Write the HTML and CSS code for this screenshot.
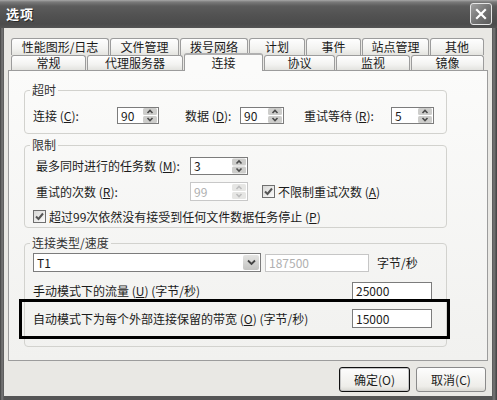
FILE: index.html
```html
<!DOCTYPE html>
<html lang="zh-CN">
<head>
<meta charset="utf-8">
<title>选项</title>
<link rel="stylesheet" href="styles.css">
</head>
<body>
<div class="window">
  <div class="titlebar">
    <span class="title">选项</span>
    <span class="close"><svg width="14" height="14" viewBox="0 0 14 14"><path d="M3 3 L11 11 M11 3 L3 11" stroke="#fff" stroke-width="2.2" stroke-linecap="square" fill="none"/></svg></span>
  </div>
  <div class="frame">
    <div class="dialog">
      <div class="tabs">
        <div class="tabrow row1">
          <div class="tab">性能图形/日志</div>
          <div class="tab">文件管理</div>
          <div class="tab">拨号网络</div>
          <div class="tab">计划</div>
          <div class="tab">事件</div>
          <div class="tab">站点管理</div>
          <div class="tab">其他</div>
        </div>
        <div class="tabrow row2">
          <div class="tab">常规</div>
          <div class="tab">代理服务器</div>
          <div class="tab active">连接</div>
          <div class="tab">协议</div>
          <div class="tab">监视</div>
          <div class="tab">镜像</div>
        </div>
      </div>
      <div class="panel">
        <fieldset class="group g1">
          <legend>超时</legend>
          <div class="row r17">
            <span class="lbl l1">连接 (<u>C</u>):</span>
            <span class="spin s1"><span class="val">90</span><svg class="ud" width="14" height="15" viewBox="0 0 14 15"><rect x="0" y="0" width="14" height="7" rx="1.5" fill="#cdcdcb"/><rect x="0" y="8" width="14" height="7" rx="1.5" fill="#cdcdcb"/><path d="M4.5 5 L7 2.5 L9.5 5" fill="none" stroke="#4a4a4a" stroke-width="1.6"/><path d="M4.5 10 L7 12.5 L9.5 10" fill="none" stroke="#4a4a4a" stroke-width="1.6"/></svg></span>
            <span class="lbl l2">数据 (<u>D</u>):</span>
            <span class="spin s2"><span class="val">90</span><svg class="ud" width="14" height="15" viewBox="0 0 14 15"><rect x="0" y="0" width="14" height="7" rx="1.5" fill="#cdcdcb"/><rect x="0" y="8" width="14" height="7" rx="1.5" fill="#cdcdcb"/><path d="M4.5 5 L7 2.5 L9.5 5" fill="none" stroke="#4a4a4a" stroke-width="1.6"/><path d="M4.5 10 L7 12.5 L9.5 10" fill="none" stroke="#4a4a4a" stroke-width="1.6"/></svg></span>
            <span class="lbl l3">重试等待 (<u>R</u>):</span>
            <span class="spin s3"><span class="val">5</span><svg class="ud" width="14" height="15" viewBox="0 0 14 15"><rect x="0" y="0" width="14" height="7" rx="1.5" fill="#cdcdcb"/><rect x="0" y="8" width="14" height="7" rx="1.5" fill="#cdcdcb"/><path d="M4.5 5 L7 2.5 L9.5 5" fill="none" stroke="#4a4a4a" stroke-width="1.6"/><path d="M4.5 10 L7 12.5 L9.5 10" fill="none" stroke="#4a4a4a" stroke-width="1.6"/></svg></span>
          </div>
        </fieldset>
        <fieldset class="group g2">
          <legend>限制</legend>
          <div class="row r18">
            <span class="lbl l4">最多同时进行的任务数 (<u>M</u>):</span>
            <span class="spin s4"><span class="val">3</span><svg class="ud" width="14" height="16" viewBox="0 0 14 15"><rect x="0" y="0" width="14" height="7" rx="1.5" fill="#cdcdcb"/><rect x="0" y="8" width="14" height="7" rx="1.5" fill="#cdcdcb"/><path d="M4.5 5 L7 2.5 L9.5 5" fill="none" stroke="#4a4a4a" stroke-width="1.6"/><path d="M4.5 10 L7 12.5 L9.5 10" fill="none" stroke="#4a4a4a" stroke-width="1.6"/></svg></span>
          </div>
          <div class="row r19 gap7">
            <span class="lbl l4">重试的次数 (<u>R</u>):</span>
            <span class="spin s4 disabled"><span class="val">99</span><svg class="ud" width="14" height="17" viewBox="0 0 14 15"><rect x="0" y="0" width="14" height="7" rx="1.5" fill="#e6e6e4"/><rect x="0" y="8" width="14" height="7" rx="1.5" fill="#e6e6e4"/><path d="M4.5 5 L7 2.5 L9.5 5" fill="none" stroke="#bdbdbd" stroke-width="1.6"/><path d="M4.5 10 L7 12.5 L9.5 10" fill="none" stroke="#bdbdbd" stroke-width="1.6"/></svg></span>
            <span class="check c1"><span class="box"><svg width="11" height="11" viewBox="0 0 11 11"><path d="M2 5.5 L4.5 8 L9 2.5" fill="none" stroke="#555" stroke-width="2"/></svg></span>不限制重试次数 (<u>A</u>)</span>
          </div>
          <div class="row r13 gap9">
            <span class="check"><span class="box"><svg width="11" height="11" viewBox="0 0 11 11"><path d="M2 5.5 L4.5 8 L9 2.5" fill="none" stroke="#555" stroke-width="2"/></svg></span>超过99次依然没有接受到任何文件数据任务停止 (<u>P</u>)</span>
          </div>
        </fieldset>
        <fieldset class="group g3">
          <legend>连接类型/速度</legend>
          <div class="row r19">
            <span class="combo"><span class="val">T1</span><span class="drop"><svg width="9" height="7" viewBox="0 0 9 7"><path d="M1 1.5 L4.5 5 L8 1.5" fill="none" stroke="#444" stroke-width="1.8"/></svg></span></span>
            <span class="field f-dis">187500</span>
            <span class="lbl unit">字节/秒</span>
          </div>
          <div class="row r18 gap10">
            <span class="lbl l5">手动模式下的流量 (<u>U</u>) (字节/秒)</span>
            <span class="field f-num">25000</span>
          </div>
          <div class="row r19 gap9">
            <span class="lbl l5">自动模式下为每个外部连接保留的带宽 (<u>O</u>) (字节/秒)</span>
            <span class="field f-num">15000</span>
          </div>
        </fieldset>
        <div class="highlight"></div>
      </div>
      <div class="buttons">
        <span class="btn default">确定(O)</span>
        <span class="btn">取消(C)</span>
      </div>
    </div>
  </div>
</div>
</body>
</html>
```
FILE: styles.css
```css
* { box-sizing: border-box; }
html, body { margin: 0; padding: 0; }
body {
  width: 497px;
  height: 400px;
  overflow: hidden;
  background: #4f5358;
  font-family: "Noto Sans CJK SC", "Noto Sans", sans-serif;
  font-size: 12px;
  color: #1b1b1b;
}
u { text-decoration: underline; text-underline-offset: 1px; }

.window {
  width: 497px;
  height: 400px;
  display: flex;
  flex-direction: column;
  background: #4f5358;
}
.titlebar {
  height: 28px;
  flex: none;
  display: flex;
  align-items: center;
  justify-content: space-between;
  padding: 0 5px 0 6px;
  background: linear-gradient(#a8a8a8 0, #7a7a7a 2px, #5c5c5c 6px, #525252 15px, #4b4b4b 24px, #545454 28px);
}
.title {
  color: #fff;
  font-weight: bold;
  font-size: 13px;
  line-height: 16px;
  letter-spacing: 1px;
  text-shadow: 1px 1px 0 #2a2a2a;
}
.close {
  width: 22px;
  height: 22px;
  border: 1px solid #e6e6e6;
  border-radius: 3px;
  background: linear-gradient(135deg, #a0a0a0, #727272 55%, #5c5c5c);
  display: flex;
  align-items: center;
  justify-content: center;
}
.frame {
  flex: 1;
  display: flex;
  padding: 0 5px 4px 4px;
  background: linear-gradient(90deg, #3e3e3e 0, #7a7a7a 2px, #555 4px, #555 492px, #777 494px, #3e3e3e 497px);
}
.dialog {
  flex: 1;
  display: flex;
  flex-direction: column;
  background: #e9e8e4;
  padding: 10px 4px 0 4px;
}

/* tabs */
.tabs {
  height: 32px;
  margin-left: 3px;
  display: flex;
  flex-direction: column;
}
.tabrow { display: flex; gap: 1px; align-items: flex-start; }
.row1 { height: 17px; }
.row2 { height: 15px; }
.tab {
  flex: none;
  height: 17px;
  border: 1px solid #9c9c9c;
  border-bottom: none;
  border-radius: 3px 3px 0 0;
  background: linear-gradient(#fefefe, #f3f3f1 60%, #e3e3df);
  text-align: center;
  line-height: 16px;
  white-space: nowrap;
}
.row2 .tab { height: 15px; line-height: 14px; }
.row1 .tab:nth-child(1) { width: 98px; }
.row1 .tab:nth-child(2) { width: 69px; }
.row1 .tab:nth-child(3) { width: 68px; }
.row1 .tab:nth-child(4) { width: 56px; }
.row1 .tab:nth-child(5) { width: 55px; }
.row1 .tab:nth-child(6) { width: 67px; }
.row1 .tab:nth-child(7) { width: 54px; }
.row2 .tab:nth-child(1) { width: 75px; }
.row2 .tab:nth-child(2) { width: 96px; }
.row2 .tab:nth-child(3) { width: 79px; }
.row2 .tab:nth-child(4) { width: 71px; }
.row2 .tab:nth-child(5) { width: 74px; }
.row2 .tab:nth-child(6) { width: 73px; }
.row2 .tab.active {
  height: 18px;
  margin-top: -2px;
  position: relative;
  z-index: 2;
  background: #fbfbfa;
  border-top: 2px solid #b0b0b0;
  line-height: 15px;
}

/* panel */
.panel {
  position: relative;
  height: 291px;
  border: 1px solid #9c9c9c;
  background: linear-gradient(#fbfbfa, #f1f1ef);
  padding: 12px 0 0 15px;
}
.group {
  margin: 0;
  width: 423px;
  min-width: 0;
  border: 1px solid #d2d2ce;
  border-radius: 4px;
}
.group legend {
  padding: 0 2px;
  margin-left: -3px;
  line-height: 14px;
  color: #333;
}
.g1 { padding: 10px 8px 9px 8px; }
.g2 { margin-top: 4px; padding: 5px 8px 4px 8px; }
.g3 { margin-top: 8px; padding: 3px 8px 18px 8px; }

.row { display: flex; align-items: center; }
.r13 { height: 13px; }
.r17 { height: 17px; }
.r18 { height: 18px; }
.r19 { height: 19px; }
.gap7 { margin-top: 7px; }
.gap9 { margin-top: 9px; }
.gap10 { margin-top: 10px; }

.lbl { flex: none; line-height: 14px; white-space: nowrap; }
.l1 { width: 84px; }
.l2 { width: 55px; margin-left: 26px; }
.l3 { width: 87px; margin-left: 20px; }
.l4 { width: 157px; padding-left: 3px; }
.l5 { width: 319px; }
.unit { margin-left: 8px; }

.spin {
  flex: none;
  height: 100%;
  display: flex;
  align-items: center;
  border: 1px solid #7c7c7c;
  background: #fff;
  padding: 1px;
}
.spin .val { flex: 1; padding-left: 2px; line-height: 14px; }
.spin .ud { flex: none; }
.s1 { width: 42px; }
.s2 { width: 44px; }
.s3 { width: 43px; }
.s4 { width: 58px; }
.spin.disabled { border-color: #c8c8c8; color: #b0b0b0; }

.check {
  display: flex;
  align-items: center;
  line-height: 14px;
  white-space: nowrap;
}
.c1 { margin-left: 14px; }
.box {
  width: 13px;
  height: 13px;
  margin-right: 3px;
  border: 1px solid #6f6f6f;
  background: linear-gradient(135deg, #d8d8d6, #fbfbfb);
  display: flex;
  align-items: center;
  justify-content: center;
}

.combo {
  flex: none;
  width: 228px;
  height: 19px;
  display: flex;
  border: 1px solid #7c7c7c;
  background: #fff;
}
.combo .val { flex: 1; padding-left: 3px; line-height: 17px; }
.combo .drop {
  width: 16px;
  margin: 1px;
  border-radius: 2px;
  background: linear-gradient(#e4e4e2, #c4c4c2);
  display: flex;
  align-items: center;
  justify-content: center;
}
.field {
  flex: none;
  height: 100%;
  border: 1px solid #7c7c7c;
  background: #fff;
  padding-left: 3px;
  display: flex;
  align-items: center;
  line-height: 14px;
}
.f-dis { width: 104px; height: 18px; margin-left: 4px; border-color: #c6c6c6; color: #b0b0b0; }
.f-num { width: 80px; }

.highlight {
  position: absolute;
  left: 10px;
  top: 228px;
  width: 431px;
  height: 40px;
  border: 3px solid #000;
}

/* buttons */
.buttons {
  display: flex;
  justify-content: flex-end;
  gap: 6px;
  padding-top: 6px;
  padding-right: 2px;
}
.btn {
  width: 70px;
  height: 25px;
  border: 1px solid #8a8a8a;
  border-radius: 3px;
  background: linear-gradient(#fdfdfd, #eeede9 80%, #d9d8d3);
  display: flex;
  align-items: center;
  justify-content: center;
  line-height: 14px;
}
.btn.default {
  width: 71px;
  border-color: #111;
  box-shadow: inset 0 0 0 1px #c4c4c4;
}
```
